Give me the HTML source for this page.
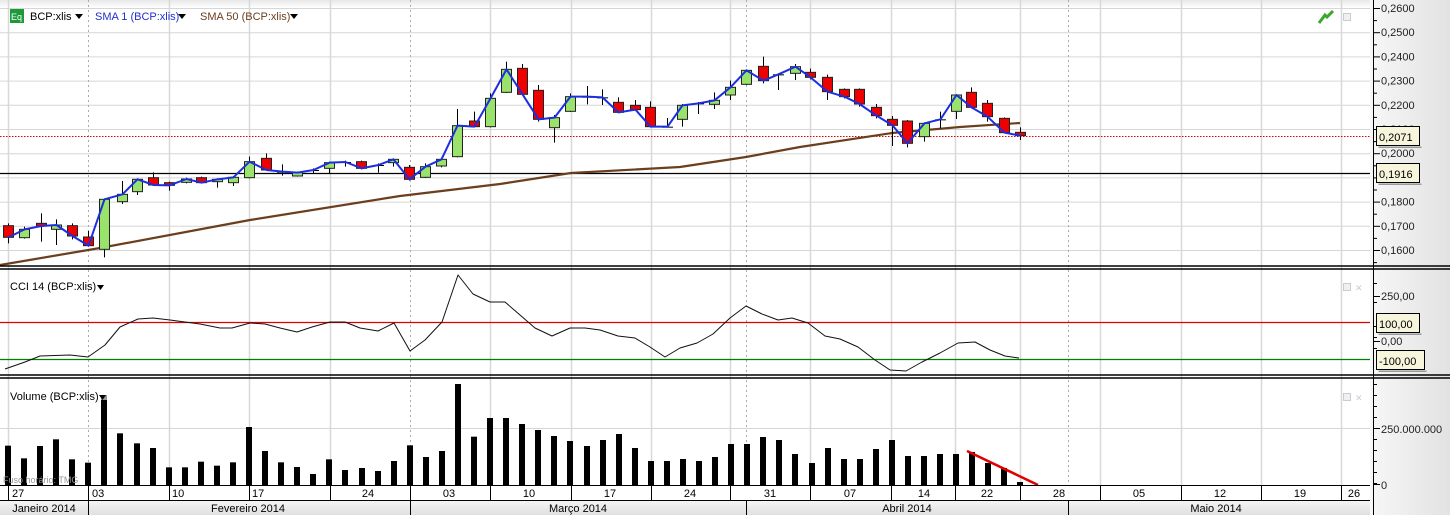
<!DOCTYPE html>
<html><head><meta charset="utf-8">
<style>
html,body{margin:0;padding:0;width:1450px;height:515px;overflow:hidden;background:#fff}
svg{display:block;font-family:"Liberation Sans","DejaVu Sans",sans-serif}
</style></head><body>
<svg id="s" width="1450" height="515" xmlns="http://www.w3.org/2000/svg">
<defs>
<linearGradient id="ax" x1="0" x2="1" y1="0" y2="0"><stop offset="0" stop-color="#f7f7f7"/><stop offset="1" stop-color="#e2e2e2"/></linearGradient>
<linearGradient id="top" x1="0" x2="0" y1="0" y2="1"><stop offset="0" stop-color="#e8e8e8"/><stop offset="1" stop-color="#ffffff"/></linearGradient>
<linearGradient id="mon" x1="0" x2="0" y1="0" y2="1"><stop offset="0" stop-color="#f4f4f4"/><stop offset="1" stop-color="#e0e0e0"/></linearGradient>
</defs>
<g id="g"></g>
</svg>
<script>
var S='';
function L(x1,y1,x2,y2,c,w,d){S+='<line x1="'+x1+'" y1="'+y1+'" x2="'+x2+'" y2="'+y2+'" stroke="'+c+'" stroke-width="'+(w||1)+'"'+(d?' stroke-dasharray="'+d+'"':'')+'/>';}
function R(x,y,w,h,f,s){S+='<rect x="'+x+'" y="'+y+'" width="'+w+'" height="'+h+'" fill="'+f+'"'+(s?' stroke="'+s+'" stroke-width="1"':'')+'/>';}
function T(x,y,t,c,sz,a){S+='<text x="'+x+'" y="'+y+'" fill="'+(c||'#000')+'" font-size="'+(sz||11)+'"'+(a?' text-anchor="'+a+'"':'')+'>'+t+'</text>';}
function P(pts,c,w){S+='<polyline fill="none" stroke="'+c+'" stroke-width="'+w+'" stroke-linejoin="round" points="'+pts.map(function(p){return p[0]+','+p[1]}).join(' ')+'"/>';}
var W=1370;
R(0,0,W,8,'url(#top)');
for(var k=0;k<11;k++){var y=8+24.2*k; if(y<266)L(0,y+.5,W,y+.5,'#d6d6d6');}
var wk=[8,169,249,330,490,571,651,730,810,891,955,1020,1100,1181,1261,1341];
var dot=[88,410,746,1068];
wk.forEach(function(x){L(x+.5,0,x+.5,485,'#d8d8d8',1.5);});
dot.forEach(function(x){L(x+.5,0,x+.5,485,'#aaa',1,'2,3');});
L(0,428.5,W,428.5,'#d6d6d6');
L(0,136.5,W,136.5,'#e00000',1,'1.5,1.5');
L(0,173.5,W,173.5,'#000',1.2);
P([[0,265],[100,248],[250,220],[400,196],[500,184],[571,173],[680,167],[746,157],[800,147],[892,133],[960,127],[1020,123]],'#6b3e1e',2.2);
var A=[[25,'r',677,712,670,730],[72,'g',688,713,680,716],[122,'r',670,678,640,725],[168,'g',675,688,658,735],[215,'r',677,708,670,718],[265,'r',711,737,693,740],[313,'g',598,748,595,772],[365,'g',583,605,543,612],[412,'g',538,575,535,585],[460,'r',533,555,517,558],[508,'r',548,556,545,572],[557,'g',537,547,533,550],[603,'r',533,548,530,550],[652,'g',538,545,535,563],[700,'g',532,548,528,558],[748,'g',485,533,470,535],[797,'r',475,510,460,512],[845,'d',515,515,493,527],[892,'g',518,528,515,530],[940,'d',510,510,505,522],[988,'g',488,505,485,520],[1036,'d',486,486,482,500],[1083,'r',485,505,482,508],[1133,'d',495,495,490,518],[1180,'g',478,488,475,500]];
var B=[[22,'r',382,418,375,422],[60,'g',380,412,370,414],[100,'g',358,378,355,382],[138,'g',257,350,207,352],[178,'r',243,260,215,262],[216,'g',175,260,160,262],[255,'g',88,157,65,159],[295,'r',85,163,72,165],[333,'r',151,238,135,245],[372,'g',233,263,225,308],[410,'g',170,214,160,216],[450,'d',170,170,138,193],[488,'d',172,172,148,195],[527,'r',187,217,172,219],[566,'r',196,209,180,212],[603,'r',202,260,184,262],[643,'d',260,260,234,262],[680,'g',196,238,192,260],[718,'d',190,190,186,222],[758,'g',181,193,157,207],[797,'g',142,165,122,180],[835,'g',91,133,88,135],[875,'r',79,122,50,130],[912,'d',103,103,100,150],[952,'g',80,100,72,120],[990,'r',97,112,86,118],[1030,'r',112,155,104,180],[1070,'r',148,170,145,175],[1108,'r',148,192,145,200],[1147,'r',202,227,192,235],[1186,'r',238,256,228,318],[1224,'r',243,310,240,322],[1263,'g',250,290,247,305],[1302,'d',238,238,215,265],[1340,'g',165,214,162,237],[1378,'r',157,202,142,205],[1417,'r',190,230,180,245],[1456,'r',235,278,232,280],[1495,'r',277,287,262,300]];
var C=[],cl=[];
A.forEach(function(a){C.push([a[0]/3,a[1],a[2]/3,a[3]/3,a[4]/3,a[5]/3]);});
B.forEach(function(b){C.push([400+b[0]/2.412,b[1],40+b[2]/3,40+b[3]/3,40+b[4]/3,40+b[5]/3]);});
C.forEach(function(c){
 var x=Math.round(c[0]);
 L(x+.5,c[4],x+.5,c[5],'#000',1);
 var t=c[2],b=c[3];
 if(c[1]=='d'){L(x-5,t+.5,x+6,t+.5,'#000',1);}
 else R(x-4.5,t,10,Math.max(b-t,1.5),c[1]=='g'?'#99e26b':'#ee0000','#222');
 cl.push([x+.5,c[1]=='g'?t:(c[1]=='d'?t:b)]);
});
P(cl,'#1c2fe0',2);
L(0,266,W,266,'#000',1.5);L(0,269,W,269,'#000',1.5);
L(0,322.5,W,322.5,'#e00000',1.2);
L(0,359.5,W,359.5,'#008000',1.2);
P([[5,369],[25,362],[40,356],[70,355],[88,357],[105,345],[120,327],[138,319],[153,318],[170,320],[185,322],[200,324],[220,328],[232,328],[250,323],[265,324],[280,328],[297,332],[312,327],[330,322],[345,322],[360,328],[378,331],[394,323],[410,351],[425,340],[442,322],[458,275],[473,294],[490,302],[505,302],[520,315],[535,328],[552,336],[570,328],[585,328],[600,330],[618,336],[635,338],[650,347],[665,357],[680,348],[697,343],[713,334],[730,318],[746,306],[762,314],[778,320],[792,318],[808,323],[825,336],[840,339],[858,347],[875,360],[890,370],[906,371],[922,362],[940,353],[958,343],[975,342],[990,350],[1005,356],[1019,358]],'#111',1);
L(0,375,W,375,'#000',1.5);L(0,378,W,378,'#000',1.5);
var vt=[197,235,198,178,238,248,60,160,190,204,262,262,245,257,247,141,213,247,261,282,238,270,264,273,243,196,231,213,12,170,114].map(function(v){return 380+v/3;});
vt=vt.concat([418,424,430,436,441,446,440,434,448,461,461,459,461,457,444,444,437,440,454,463,448,459,459,449,440,456,456,454,454,452,463,468,482]);
vt.forEach(function(y,i){var x=Math.round(8+16.07*i);R(x-3,y,6,485-y,'#000');if(i==6)R(x-3,y-5,6,5,'#999');});
L(967,451,1038,485,'#e00000',2.5);
T(3,483,'Fuso horário: TMG','#999',9);
L(0,485.5,W,485.5,'#000',1);
R(0,486,W,14,'#fff');
L(0,500.5,W,500.5,'#000',1);
R(0,501,W,14,'url(#mon)');
[8,88,169,249,330,410,490,571,651,730,810,891,955,1020,1100,1181,1261,1341].forEach(function(x){L(x+.5,486,x+.5,500,'#000',1);});
[[12,'27','start'],[92,'03','start'],[172,'10','start'],[252,'17','start'],[368,'24'],[449,'03'],[529,'10'],[610,'17'],[690,'24'],[770,'31'],[850,'07'],[924,'14'],[987,'22'],[1059,'28'],[1139,'05'],[1220,'12'],[1300,'19'],[1354,'26']].forEach(function(d){T(d[0],497,d[1],'#000',11,d[2]||'middle');});
[88,410,746,1068].forEach(function(x){L(x+.5,501,x+.5,515,'#000',1);});
[[44,'Janeiro 2014'],[248,'Fevereiro 2014'],[578,'Março 2014'],[907,'Abril 2014'],[1216,'Maio 2014']].forEach(function(m){T(m[0],512,m[1],'#000',11,'middle');});
R(1370,0,80,515,'url(#ax)');
L(1373.5,0,1373.5,515,'#000',1);
L(1370,266,1450,266,'#000',1.5);L(1370,269,1450,269,'#000',1.5);
L(1370,375,1450,375,'#000',1.5);L(1370,378,1450,378,'#000',1.5);
var pl=['0,2600','0,2500','0,2400','0,2300','0,2200','0,2100','0,2000','0,1900','0,1800','0,1700','0,1600'];
for(var k=0;k<11;k++){var y=8+24.2*k;L(1373,y+.5,1380,y+.5,'#000');L(1373,y+12.6,1377,y+12.6,'#000');T(1381,y+4,pl[k],'#222',11);}
[296,341].forEach(function(y,i){L(1373,y+.5,1380,y+.5,'#000');T(1381,y+4,['250,00','0,00'][i],'#222',11);});
[283,302,326,337,348].forEach(function(y){L(1373,y+.5,1377,y+.5,'#000');});
for(var y=384;y<485;y+=11){L(1373,y+.5,1377,y+.5,'#000');}
L(1373,428.5,1380,428.5,'#000');T(1381,433,'250.000.000','#222',11);
L(1373,484.5,1380,484.5,'#000');T(1381,489,'0','#222',11);
function box(y,t,w){R(1376.5,y+.5,w,19,'#f7f5dc','#000');S+='<rect x="'+(1378.5)+'" y="'+(y+20.5)+'" width="'+w+'" height="1.5" fill="#999"/>';T(1379,y+15,t,'#000',11);}
box(126,'0,2071',43);box(163,'0,1916',43);box(313,'100,00',43);box(350,'-100,00',48);
R(10,9,14,14,'#1a9a3a');T(11,20,'Eq','#fff',9);
T(30,20,'BCP:xlis','#000',11);S+='<path d="M75 14 L83 14 L79 19Z" fill="#000"/>';
T(95,20,'SMA 1 (BCP:xlis)','#2030d0',11);S+='<path d="M178 14 L186 14 L182 19Z" fill="#000"/>';
T(200,20,'SMA 50 (BCP:xlis)','#6b3e1e',11);S+='<path d="M290 14 L298 14 L294 19Z" fill="#000"/>';
T(10,290,'CCI 14 (BCP:xlis)','#000',11);S+='<path d="M97 285 L104 285 L100.5 290Z" fill="#000"/>';
T(10,400,'Volume (BCP:xlis)','#000',11);S+='<path d="M99 395 L106 395 L102.5 400Z" fill="#000"/>';
S+='<path d="M1319 23 L1325 15 L1327 17 L1333 11" fill="none" stroke="#3aa82a" stroke-width="3"/>';
R(1343.5,13.5,7,7,'#f0f0f0','#c8ccd4');
R(1343.5,283.5,7,7,'#f0f0f0','#c8ccd4');T(1355,291,'✕','#c8ccd4',9);
R(1343.5,393.5,7,7,'#f0f0f0','#c8ccd4');T(1355,401,'✕','#c8ccd4',9);
document.getElementById('g').innerHTML=S;
</script>
</body></html>
